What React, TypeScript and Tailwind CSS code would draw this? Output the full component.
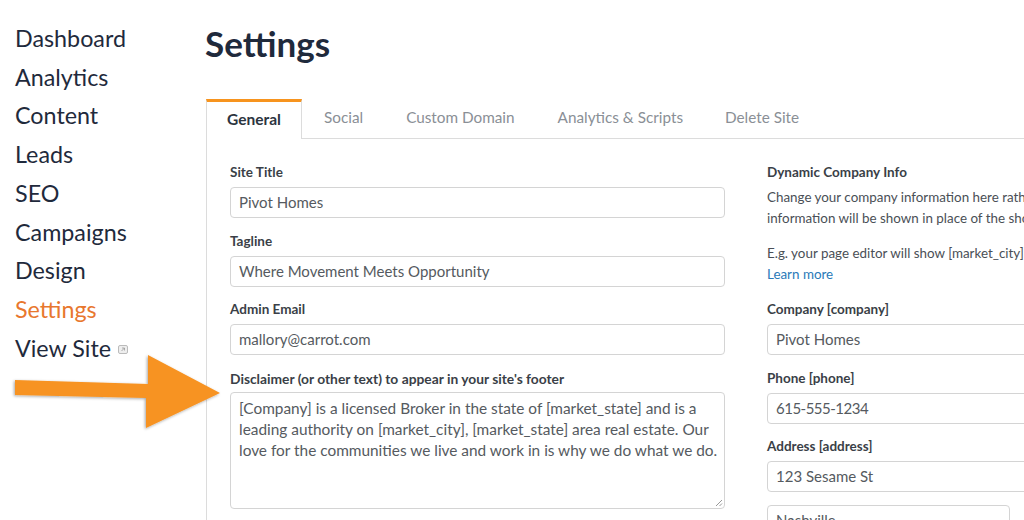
const NAV = ['Dashboard', 'Analytics', 'Content', 'Leads', 'SEO', 'Campaigns', 'Design', 'Settings', 'View Site']
const TABS = [
  { name: 'Social', className: 'ml-[22px]' },
  { name: 'Custom Domain', className: 'ml-[43px]' },
  { name: 'Analytics & Scripts', className: 'ml-[43px]' },
  { name: 'Delete Site', className: 'ml-[42px]' },
]

function Field({
  label,
  value,
  className = '',
  valueClassName = '',
}: {
  label?: string
  value: string
  className?: string
  valueClassName?: string
}) {
  return (
    <div className={className}>
      {label && <div className="mb-[7px] h-[15px] text-[13.5px] leading-[15px] font-bold text-[#3a3f47]">{label}</div>}
      <div className={`flex h-[31px] items-center rounded-[4px] border border-[#d4d4d4] px-2 text-[15px] text-[#555a60] ${valueClassName}`}>
        {value}
      </div>
    </div>
  )
}

export default function App() {
  return (
    <div className="relative flex h-[520px] w-[1024px] overflow-hidden bg-white font-['Lato',sans-serif]">
      {/* Sidebar */}
      <nav className="w-[206px] shrink-0 pt-[19px] pl-[15px]">
        {NAV.map((item) => (
          <div
            key={item}
            className={`flex h-[38.75px] items-center text-[23.3px] ${item === 'Settings' ? 'text-[#e8772e]' : 'text-[#1f2a3c]'}`}
          >
            {item}
            {item === 'View Site' && (
              <svg className="mt-[3px] ml-[7px]" width="10" height="9" viewBox="0 0 10 9" fill="none">
                <rect x="0.5" y="0.5" width="9" height="8" rx="1.5" fill="#eee" stroke="#bbb" />
                <path d="M3.5 6L6.5 3M4 3H6.5V5.5" stroke="#999" strokeWidth="0.8" />
              </svg>
            )}
          </div>
        ))}
      </nav>

      {/* Main */}
      <main className="flex-1">
        <h1 className="-ml-px h-[99px] pt-[22px] text-[35px] leading-[42px] font-bold text-[#1f2a3c]">Settings</h1>

        <div className="flex h-[40px] items-stretch border-b border-[#dcdcdc]">
          <div className="-mb-px flex w-[96px] items-center justify-center border-x border-t-[3px] border-x-[#dcdcdc] border-t-[#f7941e] bg-white pb-[2px] text-[15.5px] font-bold text-[#2c3440]">
            General
          </div>
          {TABS.map((tab) => (
            <div key={tab.name} className={`flex items-center pb-[3px] text-[15.3px] text-[#8a8f96] ${tab.className}`}>
              {tab.name}
            </div>
          ))}
        </div>

        <div className="flex h-[381px] gap-[42px] border-l border-[#dcdcdc] pt-[26px] pl-[23px]">
          <div className="flex w-[495px] shrink-0 flex-col gap-[15.5px]">
            <Field label="Site Title" value="Pivot Homes" />
            <Field label="Tagline" value="Where Movement Meets Opportunity" />
            <Field label="Admin Email" value="mallory@carrot.com" />
            <div>
              <div className="h-[15px] text-[13.8px] leading-[15px] font-bold text-[#3a3f47]">
                Disclaimer (or other text) to appear in your site's footer
              </div>
              <div className="relative mt-[6px] h-[117px] rounded-[4px] border border-[#d4d4d4] py-[5px] pl-2 text-[15.4px] leading-[21px] text-[#555a60]">
                [Company] is a licensed Broker in the state of [market_state] and is a leading authority on [market_city], [market_state] area real estate. Our love for the communities we live and work in is why we do what we do.
                <svg className="absolute right-px bottom-px" width="8" height="8" viewBox="0 0 8 8" fill="none">
                  <path d="M1 7L7 1M4.5 7L7 4.5" stroke="#999" />
                </svg>
              </div>
            </div>
          </div>

          <div className="w-[300px] shrink-0">
            <div className="h-[15px] text-[13.5px] leading-[15px] font-bold text-[#3a3f47]">Dynamic Company Info</div>
            <div className="mt-[7px] text-[13.4px] leading-[21px] whitespace-nowrap text-[#4a4f56]">
              Change your company information here rather than on each page. This
              <br />
              information will be shown in place of the shortcodes on your site.
            </div>
            <div className="mt-[14px] text-[13.4px] leading-[21px] whitespace-nowrap text-[#4a4f56]">
              E.g. your page editor will show [market_city] but your site will show
            </div>
            <div className="text-[13.4px] leading-[21px] text-[#2a7ab8]">Learn more</div>
            <div className="mt-[17px] flex flex-col gap-[15.5px]">
              <Field label="Company [company]" value="Pivot Homes" />
              <Field label="Phone [phone]" value="615-555-1234" valueClassName="tracking-[-0.5px]" />
              <Field label="Address [address]" value="123 Sesame St" />
              <Field value="Nashville" className="-mt-[3px] w-[243px]" />
            </div>
          </div>
        </div>
      </main>

      {/* Annotation arrow */}
      <svg className="absolute top-[350px] left-0" width="230" height="85" viewBox="0 0 230 85">
        <defs>
          <filter id="shadow" x="-5%" y="-10%" width="110%" height="120%">
            <feDropShadow dx="-1" dy="1" stdDeviation="1.5" floodColor="#000" floodOpacity="0.35" />
          </filter>
        </defs>
        <path d="M15 30L148 34L148 5L220 43L146 78L146 48L15 45Z" fill="#f79322" filter="url(#shadow)" />
      </svg>
    </div>
  )
}
